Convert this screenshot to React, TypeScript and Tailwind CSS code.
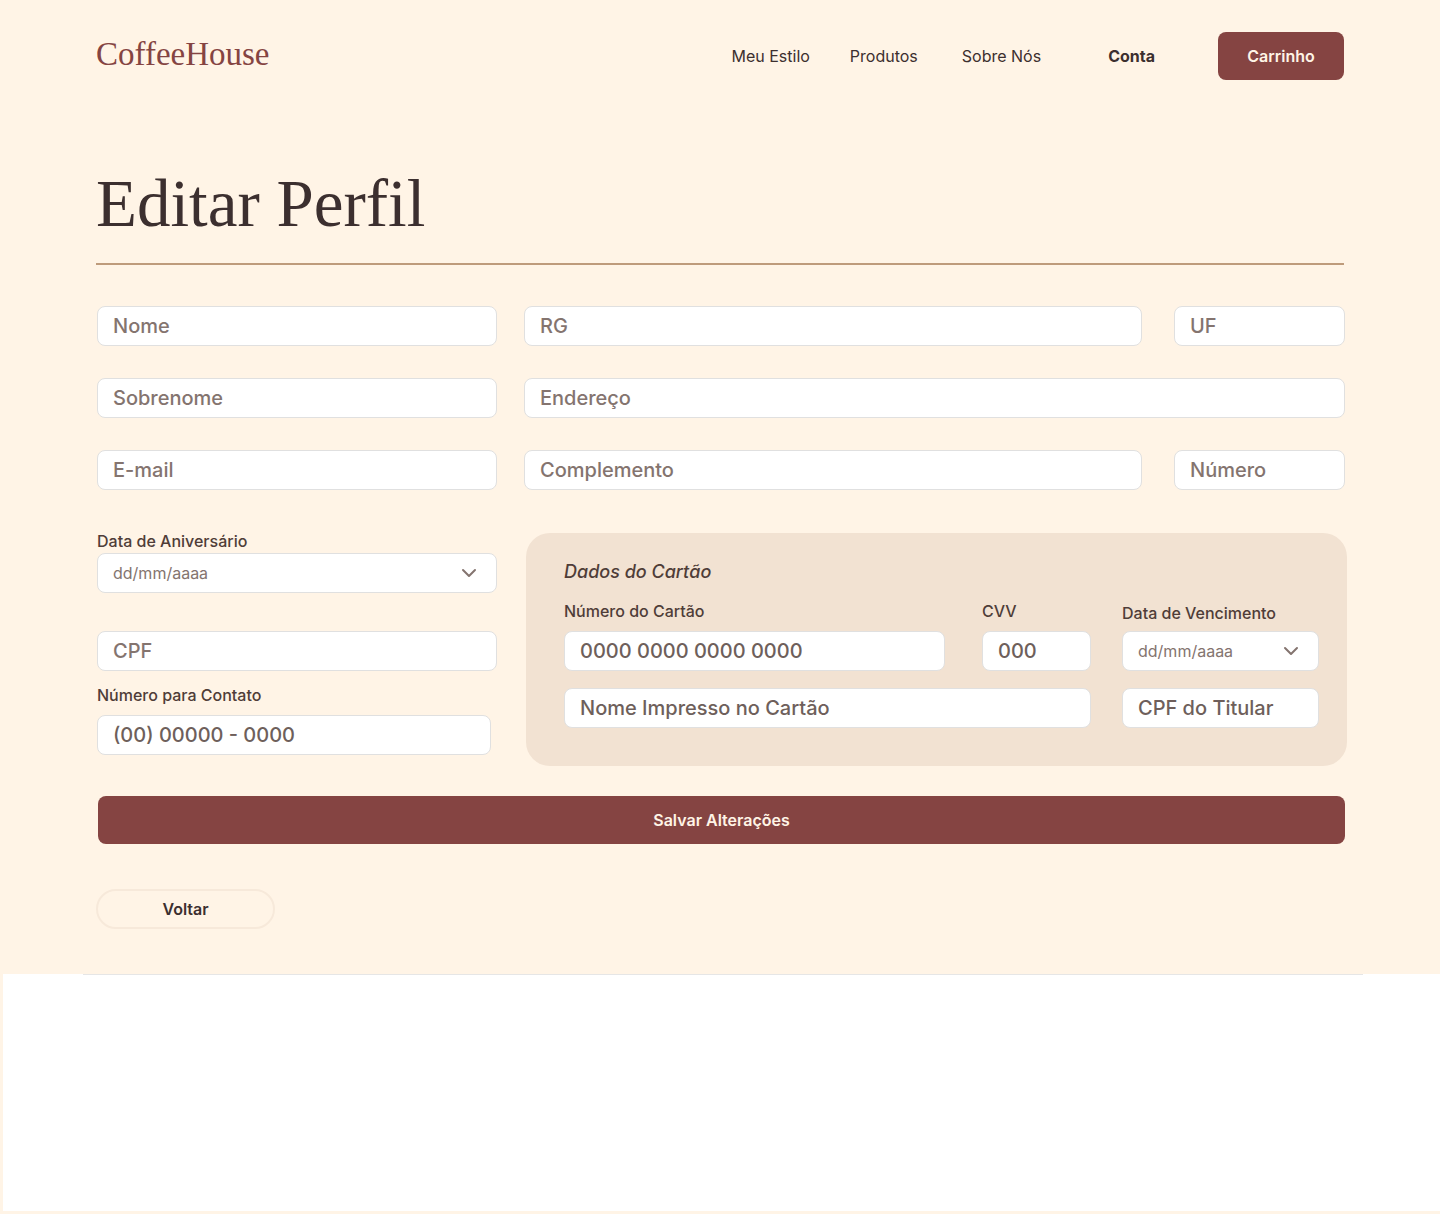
import { ChevronDown } from "lucide-react";

const label = "text-base leading-6 font-medium text-[#4f3d38]";

const box =
  "block h-10 w-full min-w-0 rounded-lg border border-[#e0e0e0] bg-white px-[15px] outline-none focus:border-[#854442]";

type FieldProps = { name: string; text: string; strong?: boolean; labelled?: boolean };

function Field({ name, text, strong = false, labelled = false }: FieldProps) {
  const tone = strong ? "placeholder:text-[#6e5f5b]" : "placeholder:text-[#84746f]";
  return (
    <input
      id={name}
      name={name}
      type="text"
      placeholder={text}
      aria-label={labelled ? undefined : text}
      className={`${box} ${tone} text-xl font-medium text-[#3c2f2f] placeholder:opacity-100`}
    />
  );
}

function DateSelect({ name }: { name: string }) {
  return (
    <div className="relative">
      <select id={name} name={name} className={`${box} appearance-none text-base text-[#84746f]`}>
        <option>dd/mm/aaaa</option>
      </select>
      <ChevronDown
        aria-hidden="true"
        strokeWidth={2}
        className="pointer-events-none absolute top-2 right-4 size-6 text-[#84746f]"
      />
    </div>
  );
}

export default function App() {
  return (
    <div className="flex min-h-screen flex-col bg-[#fff4e6] font-['Inter',sans-serif] text-[#3c2f2f]">
      <header className="flex items-center justify-between px-24 pt-8">
        <a href="#" className="pb-1 font-['Liberation_Serif',serif] text-[33px] leading-10 text-[#854442]">
          CoffeeHouse
        </a>
        <nav className="flex items-center text-base">
          <a href="#" className="mr-10">Meu Estilo</a>
          <a href="#" className="mr-11">Produtos</a>
          <a href="#" className="mr-[67px]">Sobre Nós</a>
          <a href="#" className="mr-[63px] font-bold">Conta</a>
          <button type="button" className="h-12 w-[126px] rounded-lg bg-[#854442] font-semibold text-[#fff4e6]">
            Carrinho
          </button>
        </nav>
      </header>

      <main>
        <div className="px-24 pt-[84px]">
          <h1 className="border-b-2 border-[#be9b7b] pb-5 font-['Liberation_Serif',serif] text-[67px] leading-[79px]">
            Editar Perfil
          </h1>
        </div>

        <form className="pt-[41px]" onSubmit={(e) => e.preventDefault()}>
          <div className="grid grid-cols-[400px_1fr] gap-x-[27px] gap-y-8 pr-[95px] pl-[97px]">
            <Field name="nome" text="Nome" />
            <div className="grid grid-cols-[1fr_171px] gap-8">
              <Field name="rg" text="RG" />
              <Field name="uf" text="UF" />
            </div>
            <Field name="sobrenome" text="Sobrenome" />
            <Field name="endereco" text="Endereço" />
            <Field name="email" text="E-mail" />
            <div className="grid grid-cols-[1fr_171px] gap-8">
              <Field name="complemento" text="Complemento" />
              <Field name="numero" text="Número" />
            </div>
          </div>

          <div className="grid grid-cols-[400px_1fr] items-start gap-x-[29px] pt-[39px] pr-[93px] pl-[97px]">
            <div className="flex flex-col">
              <label htmlFor="aniversario" className={label}>Data de Aniversário</label>
              <DateSelect name="aniversario" />
              <div className="pt-[38px]">
                <Field name="cpf" text="CPF" />
              </div>
              <div className="flex flex-col gap-2 pt-3 pr-[6px]">
                <label htmlFor="contato" className={label}>Número para Contato</label>
                <Field name="contato" text="(00) 00000 - 0000" strong labelled />
              </div>
            </div>

            <fieldset className="mt-1 min-w-0 rounded-3xl bg-[#f2e2d2] pt-[26px] pr-7 pb-[38px] pl-[38px]">
              <h2 className="text-lg leading-[26px] font-medium text-[#4f3d38] italic">Dados do Cartão</h2>
              <div className="grid grid-cols-[1fr_197px] gap-x-[31px] gap-y-[17px] pt-[14px]">
                <div className="grid grid-cols-[1fr_109px] gap-x-[37px]">
                  <div className="flex flex-col gap-2">
                    <label htmlFor="cartao" className={label}>Número do Cartão</label>
                    <Field name="cartao" text="0000 0000 0000 0000" strong labelled />
                  </div>
                  <div className="flex flex-col gap-2">
                    <label htmlFor="cvv" className={label}>CVV</label>
                    <Field name="cvv" text="000" strong labelled />
                  </div>
                </div>
                <div className="flex flex-col justify-end gap-[6px]">
                  <label htmlFor="vencimento" className={label}>Data de Vencimento</label>
                  <DateSelect name="vencimento" />
                </div>
                <Field name="titular" text="Nome Impresso no Cartão" strong />
                <Field name="cpf-titular" text="CPF do Titular" strong />
              </div>
            </fieldset>
          </div>

          <div className="pt-[30px] pr-[95px] pl-[98px]">
            <button type="submit" className="h-12 w-full rounded-lg bg-[#854442] font-semibold text-[#fff4e6]">
              Salvar Alterações
            </button>
          </div>
          <div className="px-24 pt-[45px] pb-[45px]">
            <button
              type="button"
              className="block h-10 w-[179px] rounded-full border-2 border-[#f7e9da] font-semibold"
            >
              Voltar
            </button>
          </div>
        </form>
      </main>

      <footer className="mb-[3px] ml-[3px] min-h-[237px] grow bg-white pr-[77px] pl-20">
        <hr className="border-[#e6e6e6]" />
      </footer>
    </div>
  );
}
